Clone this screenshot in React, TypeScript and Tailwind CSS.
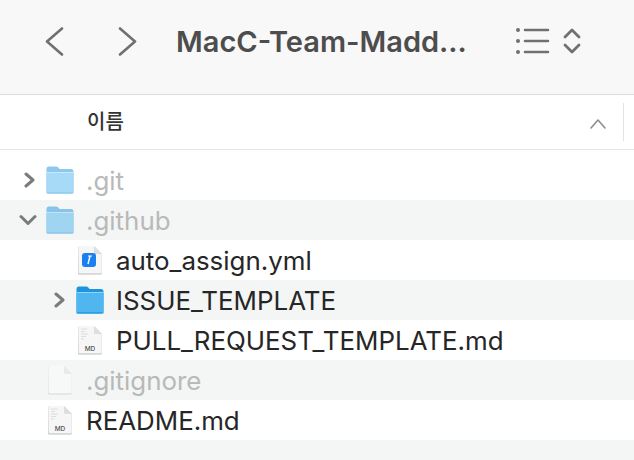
function Chevron({ dir, className }: { dir: "left" | "right"; className?: string }) {
  const d = dir === "left" ? "M18 1.5 L3 14.5 L18 27.5" : "M3 1.5 L18 14.5 L3 27.5";
  return (
    <svg width="21" height="29" viewBox="0 0 21 29" className={className} fill="none" stroke="#707070" strokeWidth="2.6" strokeLinecap="round" strokeLinejoin="round"><path d={d} /></svg>
  );
}

function SmallRight() {
  return (
    <svg width="12" height="16" viewBox="0 0 12 16" fill="none" stroke="#7b7b7b" strokeWidth="3" strokeLinecap="round" strokeLinejoin="round"><path d="M2 2 L9 8 L2 14" /></svg>
  );
}

function SmallDown() {
  return (
    <svg width="18" height="12" viewBox="0 0 18 12" fill="none" stroke="#7b7b7b" strokeWidth="3" strokeLinecap="round" strokeLinejoin="round"><path d="M2 2.5 L9 9.5 L16 2.5" /></svg>
  );
}

function Folder({ faded }: { faded?: boolean }) {
  return (
    <svg width="28" height="28" viewBox="0 0 28 28" className={faded ? "opacity-50" : ""}>
      <path d="M3 0.5 H10 Q11.5 0.5 12.5 1.8 L13.5 3 H25 Q27.5 3 27.5 5.5 V25 Q27.5 27.5 25 27.5 H3 Q0.5 27.5 0.5 25 V3 Q0.5 0.5 3 0.5 Z" fill="#1e94e0" />
      <path d="M0.5 7 H27.5 V25 Q27.5 27.5 25 27.5 H3 Q0.5 27.5 0.5 25 Z" fill="#4fb6f0" />
      <rect x="0.5" y="6" width="27" height="1" fill="#8ed6fa" />
      <rect x="0.5" y="26" width="27" height="1.5" fill="#2a9fe3" />
    </svg>
  );
}

function Doc({ faded, md, children }: { faded?: boolean; md?: boolean; children?: React.ReactNode }) {
  return (
    <svg width="26" height="30" viewBox="0 0 26 30" className={faded ? "opacity-50" : ""}>
      <path d="M1.5 2 Q1.5 1 2.5 1 H17 L25 9 V28 Q25 29.5 23.5 29.5 H2.5 Q1 29.5 1 28 Z" fill="#bdbdbd" />
      <path d="M1.5 2 Q1.5 1 2.5 1 H17 L24.8 8.8 V27.6 Q24.8 28.6 23.8 28.6 H2.5 Q1.5 28.6 1.5 27.6 Z" fill={faded ? "#fbfbfb" : "#f6f6f6"} />
      <path d="M17 1 V7.5 Q17 9 18.5 9 H25 Z" fill="#dedede" />
      {md && (
        <>
          <path d="M4 4 H10 M4 6.5 H8 M4 9 H11 M4 11.5 H9 M4 14 H7" stroke="#cfcfcf" strokeWidth="0.6" />
          <text x="13" y="26" textAnchor="middle" fontSize="6.5" fontWeight="500" fill="#555" fontFamily="Inter, sans-serif">MD</text>
        </>
      )}
      {children}
    </svg>
  );
}

function Row({ depth, arrow, icon, name, faded, shaded }: { depth: number; arrow?: "right" | "down"; icon: React.ReactNode; name: string; faded?: boolean; shaded?: boolean }) {
  return (
    <div className={`flex h-10 items-center ${shaded ? "bg-[#f4f5f5]" : "bg-white"}`} style={{ paddingLeft: depth * 30 }}>
      <div className={`flex w-[45px] shrink-0 items-center justify-center ${arrow === "down" ? "pl-[11px]" : "pl-[15px]"}`}>
        {arrow === "right" && <SmallRight />}
        {arrow === "down" && <SmallDown />}
      </div>
      <div className="flex w-[30px] shrink-0 justify-center">{icon}</div>
      <span className={`ml-[11px] mt-[2px] text-[25.9px] leading-none ${faded ? "text-[#b9b9b9]" : "text-[#262626]"}`}>{name}</span>
    </div>
  );
}

export default function App() {
  return (
    <div className="flex h-[460px] w-[634px] flex-col overflow-hidden bg-white font-['Inter','Noto_Sans_CJK_KR',sans-serif]">
      <div className="flex h-[95px] shrink-0 items-center border-b border-[#dcdcdc] bg-[#f8f8f8] pb-[12px] pl-[44px]">
        <Chevron dir="left" />
        <Chevron dir="right" className="ml-[52px]" />
        <span className="ml-[38px] text-[29px] font-semibold leading-none text-[#4d4d4d]">MacC-Team-Madd...</span>
        <svg width="36" height="28" viewBox="0 0 36 28" className="ml-[48px]" fill="none">
          <circle cx="3" cy="3" r="2" fill="#707070" /><circle cx="3" cy="14" r="2" fill="#707070" /><circle cx="3" cy="25" r="2" fill="#707070" />
          <path d="M10 3 H33 M10 14 H33 M10 25 H33" stroke="#707070" strokeWidth="2.6" strokeLinecap="round" />
        </svg>
        <svg width="18" height="28" viewBox="0 0 18 28" className="ml-[12px]" fill="none" stroke="#707070" strokeWidth="2.8" strokeLinecap="round" strokeLinejoin="round">
          <path d="M2 10 L9 3 L16 10 M2 18 L9 25 L16 18" />
        </svg>
      </div>
      <div className="flex h-[55px] shrink-0 items-center border-b border-[#e4e4e4] pl-[87px] pr-[10px]">
        <span className="text-[20px] font-medium leading-none text-[#333333]">이름</span>
        <svg width="18" height="12" viewBox="0 0 18 12" className="ml-auto mt-[3px]" fill="none" stroke="#8e8e8e" strokeWidth="1.6" strokeLinecap="round" strokeLinejoin="round"><path d="M2 10 L9 2 L16 10" /></svg>
        <div className="ml-[16px] h-[38px] w-px bg-[#e4e4e4]" />
      </div>
      <div className="flex flex-col pt-[10px]">
        <Row depth={0} arrow="right" icon={<Folder faded />} name=".git" faded />
        <Row depth={0} arrow="down" icon={<Folder faded />} name=".github" faded shaded />
        <Row depth={1} icon={<Doc><rect x="5" y="8" width="14" height="14" rx="3" fill="#1a7ff0" /><path d="M13 11 L11 19" stroke="#fff" strokeWidth="1.4" /><path d="M11 11 H15" stroke="#fff" strokeWidth="1" /></Doc>} name="auto_assign.yml" />
        <Row depth={1} arrow="right" icon={<Folder />} name="ISSUE_TEMPLATE" shaded />
        <Row depth={1} icon={<Doc md />} name="PULL_REQUEST_TEMPLATE.md" />
        <Row depth={0} icon={<Doc faded />} name=".gitignore" faded shaded />
        <Row depth={0} icon={<Doc md />} name="README.md" />
        <div className="h-10 bg-[#f4f5f5]" />
      </div>
    </div>
  );
}
